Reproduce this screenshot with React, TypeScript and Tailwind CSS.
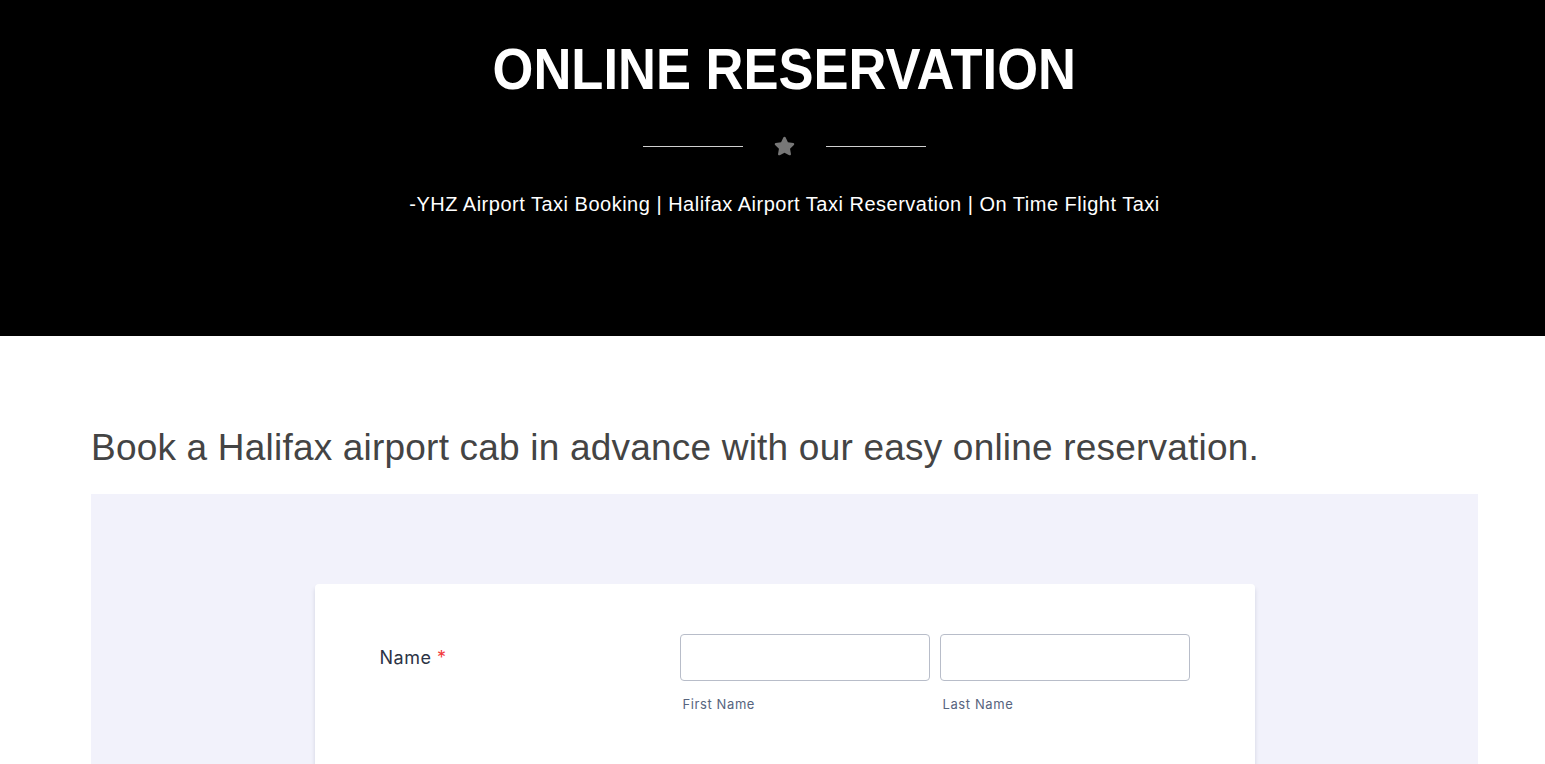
import { FaStar } from 'react-icons/fa'

function NameField() {
  return (
    <div className="flex">
      <div className="w-[300px] pt-[10px] text-[18px] tracking-[0.5px] text-[#2c3345] font-['Inter',sans-serif]">
        Name <span className="text-[#f23a3c]">*</span>
      </div>
      <div className="flex gap-[10px]">
        {['First Name', 'Last Name'].map((label) => (
          <div key={label} className="w-[250px]">
            <input className="h-[47px] w-full rounded-[4px] border border-[#b8bdc9] bg-white px-3" />
            <p className="mt-[14px] pl-[3px] text-[13px] tracking-[0.6px] text-[#57647e] font-['Inter',sans-serif]">{label}</p>
          </div>
        ))}
      </div>
    </div>
  )
}

export default function App() {
  return (
    <div className="min-h-screen bg-white font-['Liberation_Sans',Arial,sans-serif]">
      <header className="h-[336px] bg-black pl-6 pt-[40px] text-center text-white">
        <h1 className="inline-block scale-x-[0.905] text-[58px] font-bold leading-none">ONLINE RESERVATION</h1>
        <div className="mt-[38px] flex items-center justify-center gap-[31px]">
          <span className="h-px w-[100px] bg-[#d0d0d0]" />
          <FaStar className="h-[20px] w-[21px] text-[#777777]" />
          <span className="h-px w-[100px] bg-[#d0d0d0]" />
        </div>
        <p className="mt-[33px] text-[20px] leading-[30px] tracking-[0.5px]">
          -YHZ Airport Taxi Booking | Halifax Airport Taxi Reservation | On Time Flight Taxi
        </p>
      </header>

      <main className="pl-[91px] pr-[67px] pt-[93px]">
        <h2 className="text-[37px] leading-none tracking-[0.2px] text-[#444444]">
          Book a Halifax airport cab in advance with our easy online reservation.
        </h2>
        <div className="mt-[28px] flex h-[400px] justify-center bg-[#f2f2fb] pt-[90px]">
          <div className="h-[300px] w-[940px] rounded-[4px] bg-white px-[65px] pt-[50px] shadow-[0_4px_4px_rgba(87,100,126,0.21)]">
            <NameField />
          </div>
        </div>
      </main>
    </div>
  )
}
